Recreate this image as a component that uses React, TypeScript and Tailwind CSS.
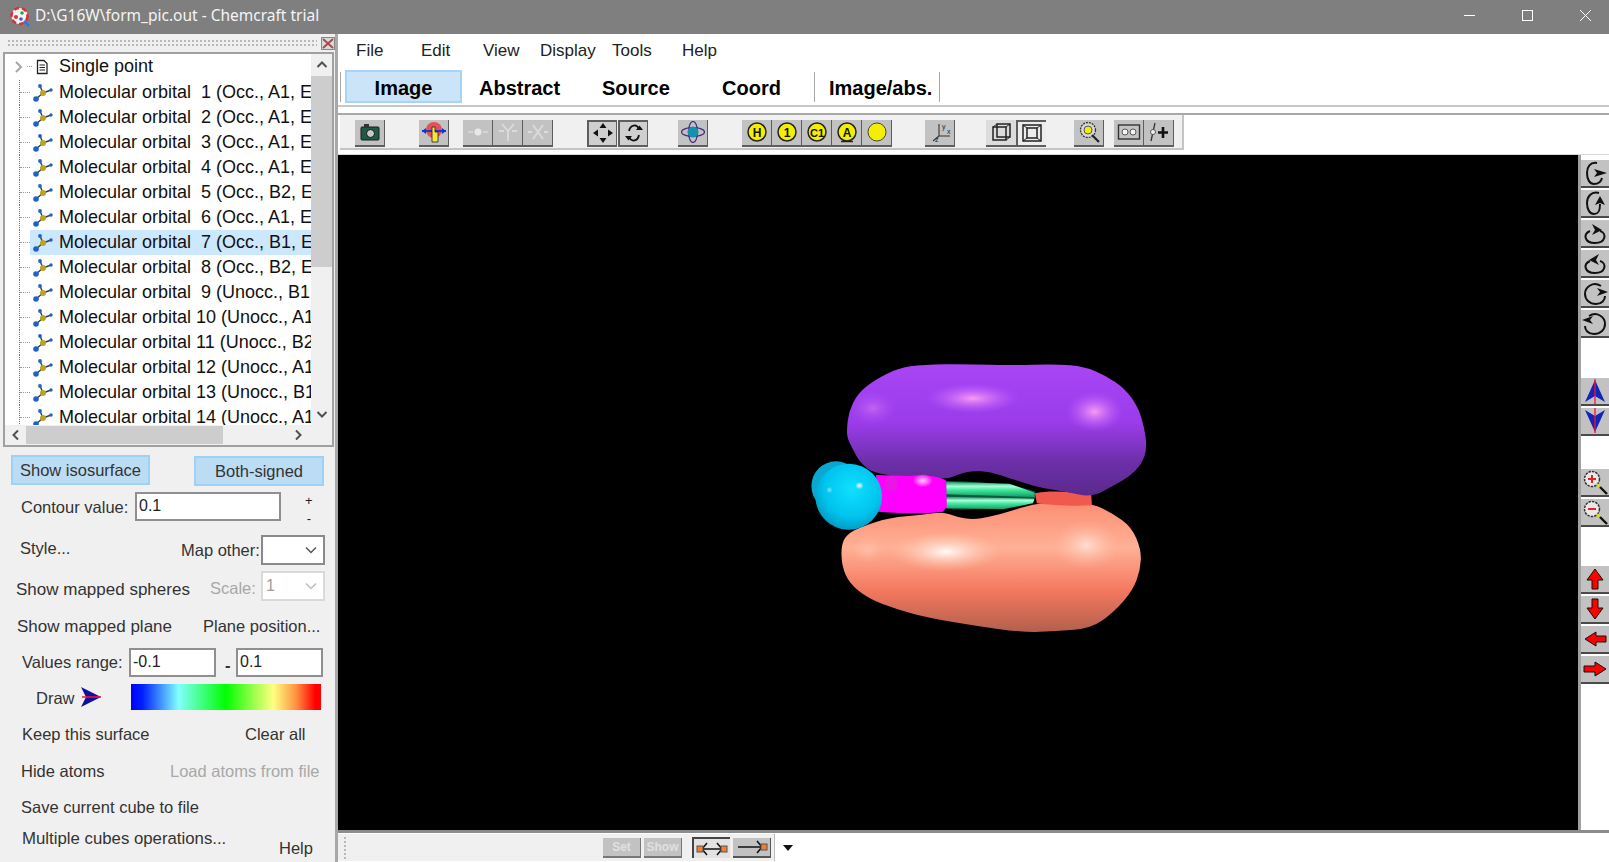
import React from "react";

const FONT = "font-['Liberation_Sans',Arial,sans-serif]";

function MolIcon() {
  return (
    <svg width="21" height="20" viewBox="0 0 21 20" className="shrink-0">
      <path d="M11 10 L4 16 M11 10 L8 3 M11 10 L19 7" stroke="#3b3b3b" strokeWidth="1.4" />
      <circle cx="11" cy="10" r="3" fill="#b7a52a" />
      <circle cx="4" cy="16" r="2.8" fill="#1b62c9" />
      <circle cx="8" cy="3" r="1.9" fill="#1b62c9" />
      <circle cx="19" cy="7" r="1.7" fill="#1b62c9" />
    </svg>
  );
}

const orbitals = [
  " 1 (Occ., A1, E", " 2 (Occ., A1, E", " 3 (Occ., A1, E", " 4 (Occ., A1, E", " 5 (Occ., B2, E",
  " 6 (Occ., A1, E", " 7 (Occ., B1, E", " 8 (Occ., B2, E", " 9 (Unocc., B1", "10 (Unocc., A1",
  "11 (Unocc., B2", "12 (Unocc., A1", "13 (Unocc., B1", "14 (Unocc., A1",
];

function TreeRow({ text, selected }: { text: string; selected?: boolean }) {
  return (
    <div className="flex h-[25px] shrink-0 items-center">
      <div className="ml-[14px] h-full w-[11px] shrink-0 border-l border-dotted border-[#777]">
        <div className="h-[13px] border-b border-dotted border-[#999]" />
      </div>
      <div className={`flex h-full flex-1 items-center overflow-hidden ${selected ? "bg-[#cce8ff]" : ""}`}>
        <div className="ml-[2px]"><MolIcon /></div>
        <span className="ml-[6px] whitespace-pre text-[18px] leading-[25px] text-[#111]">{"Molecular orbital " + text}</span>
      </div>
    </div>
  );
}

function Chev({ d }: { d: string }) {
  return (
    <svg width="12" height="12" viewBox="0 0 12 12">
      <path d={d} fill="none" stroke="#505050" strokeWidth="2" />
    </svg>
  );
}

function Tree() {
  return (
    <div className="ml-[3px] flex h-[395px] w-[331px] flex-col border-2 border-[#a0a0a0] bg-white">
      <div className="flex h-[371px] overflow-hidden">
        <div className="flex min-w-0 flex-1 flex-col overflow-hidden">
          <div className="flex h-[26px] shrink-0 items-center pb-[1px]">
            <svg width="12" height="14" viewBox="0 0 12 14" className="ml-[8px] shrink-0">
              <path d="M3 2 L8 7 L3 12" fill="none" stroke="#a6a6a6" strokeWidth="2" />
            </svg>
            <span className="ml-[2px] h-0 w-[5px] border-b border-dotted border-[#999]" />
            <svg width="14" height="16" viewBox="0 0 14 16" className="ml-[3px] shrink-0">
              <path d="M2.5 1.5 H9 L12 4.500 V14.500 H2.500 Z" fill="#fff" stroke="#222" strokeWidth="1.300" />
              <path d="M4.500 6 H10 M4.500 8.500 H10 M4.500 11 H10" stroke="#222" strokeWidth="1.200" />
            </svg>
            <span className="ml-[10px] text-[18px] leading-[25px] text-[#111]">Single point</span>
          </div>
          {orbitals.map((t, i) => (
            <TreeRow key={t} text={t} selected={i === 6} />
          ))}
        </div>
        <div className="flex w-[21px] shrink-0 flex-col items-center bg-[#f0f0f0]">
          <div className="flex h-[22px] items-center"><Chev d="M1.500 8 L6 3.500 L10.500 8" /></div>
          <div className="h-[191px] w-full bg-[#cdcdcd]" />
          <div className="flex-1" />
          <div className="flex h-[22px] items-center"><Chev d="M1.500 4 L6 8.500 L10.500 4" /></div>
        </div>
      </div>
      <div className="flex h-[20px] items-center bg-[#f0f0f0]">
        <div className="flex w-[21px] justify-center"><Chev d="M8 1.500 L3.500 6 L8 10.500" /></div>
        <div className="h-[18px] w-[197px] bg-[#cdcdcd]" />
        <div className="flex-1" />
        <div className="mr-[28px]"><Chev d="M4 1.500 L8.500 6 L4 10.500" /></div>
      </div>
    </div>
  );
}

function Select({ value, disabled }: { value?: string; disabled?: boolean }) {
  return (
    <div className={`flex h-[30px] w-[64px] items-center justify-between border-2 bg-white pl-[3px] pr-[6px] text-[16px] ${disabled ? "border-[#d9d9d9] text-[#a0a0a0]" : "border-[#8a8a8a] text-[#222]"}`}>
      <span>{value}</span>
      <svg width="12" height="8" viewBox="0 0 12 8">
        <path d="M1 1.500 L6 6.500 L11 1.500" fill="none" stroke={disabled ? "#bdbdbd" : "#555"} strokeWidth="1.500" />
      </svg>
    </div>
  );
}

function TextBox({ value, className }: { value: string; className: string }) {
  return (
    <div className={`flex h-[29px] items-center border-2 border-[#8f8f8f] bg-white pb-[2px] pl-[2px] text-[16px] text-[#222] ${className}`}>{value}</div>
  );
}

function Controls() {
  return (
    <div className="flex flex-1 flex-col overflow-hidden text-[16.500px] text-[#333]">
      <div className="flex h-[44px] shrink-0 pt-[8px]">
        <div className="ml-[11px] flex h-[30px] w-[139px] items-center justify-center border-2 border-[#9fd0f5] bg-[#bcdcf4] pt-[1px]">Show isosurface</div>
        <div className="ml-[44px] mt-[1px] flex h-[30px] w-[130px] items-center justify-center border-2 border-[#9fd0f5] bg-[#bcdcf4] pt-[1px]">Both-signed</div>
      </div>
      <div className="flex h-[34px] shrink-0 items-start pt-[1px]">
        <span className="ml-[21px] w-[114px] pt-[3px]">Contour value:</span>
        <TextBox value="0.1" className="w-[146px]" />
        <div className="ml-[24px] flex flex-col items-center text-[13px] leading-[18px] text-[#222]"><span>+</span><span>-</span></div>
      </div>
      <div className="flex h-[43px] shrink-0 items-start pt-[10px]">
        <span className="ml-[20px] w-[161px] pt-[1px]">Style...</span>
        <span className="w-[80px] whitespace-nowrap pt-[3px]">Map other:</span>
        <Select />
      </div>
      <div className="flex h-[36px] shrink-0 items-center">
        <span className="ml-[16px] w-[194px] pt-[7px] text-[17px]">Show mapped spheres</span>
        <span className="w-[51px] pt-[5px] text-[#a8a8a8]">Scale:</span>
        <Select value="1" disabled />
      </div>
      <div className="flex h-[41px] shrink-0 items-center pt-[4px]">
        <span className="ml-[17px] w-[186px] text-[17px]">Show mapped plane</span>
        <span>Plane position...</span>
      </div>
      <div className="flex h-[35px] shrink-0 items-center">
        <span className="ml-[22px] w-[107px] pb-[1px]">Values range:</span>
        <TextBox value="-0.1" className="w-[87px]" />
        <span className="ml-[9px] w-[11px] pt-[6px] font-bold">-</span>
        <TextBox value="0.1" className="w-[87px]" />
      </div>
      <div className="flex h-[34px] shrink-0 items-center">
        <span className="ml-[36px] w-[44px] pt-[3px]">Draw</span>
        <svg width="22" height="22" viewBox="0 0 22 22" className="shrink-0">
          <path d="M1 1 L21 11 L1 21 L6 11 Z" fill="#10109a" />
          <path d="M2 11 H21" stroke="#ff1030" strokeWidth="1.500" />
        </svg>
        <div className="ml-[29px] h-[26px] w-[190px] bg-[linear-gradient(90deg,#0000ff_0%,#0020ff_6%,#80ffff_25%,#00ff00_50%,#a0ff50_65%,#ffff80_75%,#ff9040_87%,#ff0000_97%)]" />
      </div>
      <div className="flex h-[38px] shrink-0 items-center pt-[2px]">
        <span className="ml-[22px] w-[223px]">Keep this surface</span>
        <span>Clear all</span>
      </div>
      <div className="flex h-[38px] shrink-0 items-center">
        <span className="ml-[21px] w-[149px]">Hide atoms</span>
        <span className="text-[#a8a8a8]">Load atoms from file</span>
      </div>
      <div className="flex h-[34px] shrink-0 items-center">
        <span className="ml-[21px]">Save current cube to file</span>
      </div>
      <div className="flex h-[34px] shrink-0 items-start">
        <span className="ml-[22px] w-[257px] pt-[2px] text-[16.800px]">Multiple cubes operations...</span>
        <span className="pt-[12px]">Help</span>
      </div>
    </div>
  );
}

function LeftPanel() {
  return (
    <div className="flex h-[828px] w-[338px] shrink-0 flex-col border-r-[3px] border-[#a8a8a8] bg-[#f0f0f0]">
      <div className="flex h-[18px] shrink-0 items-center">
        <div className="ml-[7px] h-[8px] w-[310px] bg-[radial-gradient(circle,#b8b8b8_1px,transparent_1.200px)] bg-[length:4px_4px]" />
        <svg width="14" height="13" viewBox="0 0 14 13" className="ml-[4px]">
          <rect x="0.500" y="0.500" width="13" height="12" fill="#d8d8d8" stroke="#888" />
          <path d="M2 2 L12 11 M12 2 L2 11" stroke="#a04a4a" strokeWidth="1.800" />
        </svg>
      </div>
      <Tree />
      <Controls />
    </div>
  );
}

function Btn({ children, className = "", pressed, size = "tb" }: { children?: React.ReactNode; className?: string; pressed?: boolean; size?: string }) {
  const base = size === "side" ? "h-[28px] w-[28px] border-b-2 border-[#4a4a4a] bg-[#c2c2c2]" : "h-[27px] w-[30px] bg-[#c2c2c2] border-b-2 border-r border-[#5e5e5e]";
  const press = pressed ? "border-t-2 border-l-2 border-[#2e2e2e] !bg-[#cfcfcf]" : "";
  return <div className={`flex shrink-0 items-center justify-center ${base} ${press} ${className}`}>{children}</div>;
}

const Ico = ({ children, w = 24, h = 22 }: { children: React.ReactNode; w?: number; h?: number }) => (
  <svg width={w} height={h} viewBox={`0 0 ${w} ${h}`}>{children}</svg>
);

function YellowBall({ t, s = 12, under }: { t?: string; s?: number; under?: boolean }) {
  return (
    <Ico>
      <circle cx="12" cy="11" r="9" fill="#f4ee00" stroke="#222" strokeWidth={t ? 1.500 : 0.800} />
      {t && <text x="12" y="15.500" textAnchor="middle" fontSize={s} fontWeight="700" fontFamily="Liberation Sans" fill="#111">{t}</text>}
      {under && <path d="M6 20.500 H18" stroke="#222" strokeWidth="1.500" />}
    </Ico>
  );
}

function GrayGlyph({ kind }: { kind: number }) {
  return (
    <Ico>
      {kind === 0 && <><circle cx="12" cy="11" r="3.500" fill="#e8e8e8" /><path d="M2 11 H7 M17 11 H22" stroke="#dcdcdc" strokeWidth="1.600" /></>}
      {kind === 1 && <path d="M12 20 V10 L6 3 M12 10 L18 3 M3 10 H8 M16 10 H21" fill="none" stroke="#dcdcdc" strokeWidth="1.800" />}
      {kind === 2 && <path d="M7 4 L17 18 M17 4 L7 18 M2 11 H6 M18 11 H22" fill="none" stroke="#dcdcdc" strokeWidth="1.800" />}
    </Ico>
  );
}

function TopToolbar() {
  return (
    <div className="flex h-[35px] w-[844px] shrink-0 items-center border-b-2 border-r-2 border-[#c4c4c4] bg-[#f0f0f0] pl-[15px] pt-[3px]">
      <Btn>
        <Ico>
          <rect x="3" y="6" width="18" height="13" rx="1" fill="#1f5a45" stroke="#1a1a1a" />
          <rect x="6" y="3" width="5" height="4" fill="#333" />
          <circle cx="12.500" cy="12.500" r="4" fill="#c9c9c9" stroke="#111" />
        </Ico>
      </Btn>
      <Btn className="ml-[34px]">
        <Ico>
          <circle cx="12" cy="9" r="8" fill="#e2505a" />
          <path d="M0 10 H24" stroke="#0a34e0" strokeWidth="1.800" />
          <path d="M0 10 L4 7 V13 Z M24 10 L20 7 V13 Z" fill="#0a34e0" />
          <path d="M10 21 V6 H13 V11 H16 V21 Z" fill="#f8e43a" stroke="#222" strokeWidth="0.800" />
        </Ico>
      </Btn>
      <Btn className="ml-[14px]"><GrayGlyph kind={0} /></Btn>
      <Btn><GrayGlyph kind={1} /></Btn>
      <Btn><GrayGlyph kind={2} /></Btn>
      <Btn pressed className="ml-[34px]">
        <Ico>
          <path d="M12 1 L8.500 6 H15.500 Z M12 21 L8.500 16 H15.500 Z M2 11 L7 7.500 V14.500 Z M22 11 L17 7.500 V14.500 Z" fill="#111" />
        </Ico>
      </Btn>
      <Btn pressed className="ml-[1px]">
        <Ico>
          <path d="M7 9 A5.500 7.500 0 0 1 17 7 M17 13 A5.500 7.500 0 0 1 7 15" fill="none" stroke="#111" strokeWidth="1.800" />
          <path d="M14 8 H21 L17.500 3.500 Z M3 14 H10 L6.500 18.500 Z" fill="#111" />
        </Ico>
      </Btn>
      <Btn className="ml-[30px]">
        <Ico>
          <ellipse cx="12" cy="11" rx="4.500" ry="10.500" fill="none" stroke="#4a2a7a" strokeWidth="1.200" />
          <ellipse cx="12" cy="11" rx="11.500" ry="4.500" fill="none" stroke="#4a2a7a" strokeWidth="1.200" />
          <circle cx="12" cy="11" r="5.500" fill="#1590b0" />
        </Ico>
      </Btn>
      <Btn className="ml-[34px]"><YellowBall t="H" /></Btn>
      <Btn><YellowBall t="1" /></Btn>
      <Btn><YellowBall t="C1" s={11} /></Btn>
      <Btn><YellowBall t="A" under /></Btn>
      <Btn><YellowBall /></Btn>
      <Btn className="ml-[33px]">
        <Ico>
          <path d="M11 3 V15 H22 M11 15 L5 20" fill="none" stroke="#333" strokeWidth="1.100" />
          <text x="14" y="8" fontSize="7" fontFamily="Liberation Sans" fill="#222">y</text>
          <text x="19" y="13" fontSize="7" fontFamily="Liberation Sans" fill="#222">x</text>
          <text x="7" y="21" fontSize="7" fontFamily="Liberation Sans" fill="#222">z</text>
        </Ico>
      </Btn>
      <Btn className="ml-[31px] border-r-0 !bg-[#dcdcdc]">
        <Ico>
          <rect x="4" y="6" width="13" height="13" fill="none" stroke="#222" strokeWidth="1.500" />
          <rect x="8" y="3" width="13" height="13" fill="none" stroke="#222" strokeWidth="1.500" />
          <path d="M4 6 L8 3 M17 6 L21 3 M17 19 L21 16" stroke="#222" />
        </Ico>
      </Btn>
      <Btn pressed className="border-b-0 border-r-0 !bg-[#ededed]">
        <Ico>
          <rect x="3" y="3" width="18" height="16" fill="none" stroke="#222" strokeWidth="1.500" />
          <rect x="7" y="6" width="10" height="10" fill="none" stroke="#222" strokeWidth="1.500" />
          <path d="M3 3 L7 6 M21 3 L17 6 M3 19 L7 16 M21 19 L17 16" stroke="#222" />
        </Ico>
      </Btn>
      <Btn className="ml-[28px]">
        <Ico>
          <circle cx="11" cy="9" r="7.500" fill="#d8d8d8" stroke="#333" strokeWidth="1.300" strokeDasharray="2 1" />
          <circle cx="11" cy="9" r="4" fill="#f4ee00" stroke="#555" />
          <path d="M15 14 L22 21" stroke="#222" strokeWidth="2.200" />
        </Ico>
      </Btn>
      <Btn className="ml-[10px]">
        <Ico>
          <rect x="1.500" y="4" width="21" height="14" fill="none" stroke="#333" strokeWidth="1.400" />
          <circle cx="8" cy="11" r="3" fill="#f4f4f4" stroke="#555" />
          <circle cx="16" cy="11" r="3" fill="#f4f4f4" stroke="#555" />
        </Ico>
      </Btn>
      <Btn>
        <Ico>
          <path d="M8 2 L4 20" stroke="#333" strokeWidth="1.300" />
          <circle cx="6" cy="11" r="2.500" fill="#f4f4f4" stroke="#555" />
          <path d="M16 6 V17 M11 11.500 H21" stroke="#111" strokeWidth="2.600" />
        </Ico>
      </Btn>
    </div>
  );
}

function Rot({ d, head }: { d: string; head: string }) {
  return (
    <Ico w={26} h={26}>
      <path d={d} fill="none" stroke="#111" strokeWidth="2" />
      <path d={head} fill="#111" />
    </Ico>
  );
}

function RightBar() {
  const arrow = (p: string, line: string, fill: string, lineC: string) => (
    <Ico w={26} h={26}>
      <path d={p} fill={fill} stroke={fill === "#ff0000" ? "#111" : "none"} strokeWidth="1" />
      <path d={line} stroke={lineC} strokeWidth="1.300" />
    </Ico>
  );
  const mag = (minus?: boolean) => (
    <Ico w={26} h={26}>
      <circle cx="10" cy="10" r="7.500" fill="#e8e8e8" stroke="#333" strokeWidth="1.500" strokeDasharray="2.500 1" />
      <path d="M6 10 H14" stroke="#e8202a" strokeWidth="2" />
      {!minus && <path d="M10 6 V14" stroke="#e8202a" strokeWidth="2" />}
      <path d="M15 15 L18 18" stroke="#d8d820" strokeWidth="2.200" />
      <path d="M18 18 L25 25" stroke="#111" strokeWidth="2.400" />
    </Ico>
  );
  return (
    <div className="flex w-[31px] shrink-0 flex-col items-end border-l-[3px] border-[#a0a0a0] bg-white pt-[5px]">
      <div className="flex w-full flex-col items-end gap-[2px]">
        <Btn size="side"><Rot d="M15 3 C8 2 5 7 5 13 C5 20 8 24 12 24 C16 24 19 22 20 18" head="M12 9 L25 13 L12 17 L15 13 Z" /></Btn>
        <Btn size="side"><Rot d="M17 3 C9 1 5 7 5 13 C5 20 8 24 12 24 C16 24 18 22 18 14" head="M13 15 L18 6 L23 15 L18 13 Z" /></Btn>
        <Btn size="side"><Rot d="M8 11 C1 14 2 23 13 23 C24 23 25 13 18 11" head="M10 4 L20 10 L10 15 L13 10 Z" /></Btn>
        <Btn size="side"><Rot d="M8 11 C1 14 2 23 13 23 C24 23 25 13 18 11" head="M17 4 L7 10 L17 15 L14 10 Z" /></Btn>
        <Btn size="side"><Rot d="M19 6 C11 1 3 7 3 14 C3 20 8 24 14 24 C20 24 23 20 23 16" head="M15 8 L26 12 L15 16 L18 12 Z" /></Btn>
        <Btn size="side"><Rot d="M7 6 C15 1 23 7 23 14 C23 20 18 24 12 24 C6 24 3 20 3 16" head="M11 6 L0 10 L11 14 L8 10 Z" /></Btn>
      </div>
      <div className="mt-[40px] flex w-full flex-col items-end gap-[2px]">
        <Btn size="side">{arrow("M13 2 L23 24 L13 18 L3 24 Z", "M13 1 V26", "#1126b8", "#ff1030")}</Btn>
        <Btn size="side">{arrow("M13 24 L23 2 L13 8 L3 2 Z", "M13 0 V25", "#1126b8", "#ff1030")}</Btn>
      </div>
      <div className="mt-[33px] flex w-full flex-col items-end gap-[2px]">
        <Btn size="side">{mag()}</Btn>
        <Btn size="side">{mag(true)}</Btn>
      </div>
      <div className="mt-[39px] flex w-full flex-col items-end gap-[2px]">
        <Btn size="side">{arrow("M13 3 L21 14 H16 V23 H10 V14 H5 Z", "M0 0 V0", "#ff0000", "#000")}</Btn>
        <Btn size="side">{arrow("M13 23 L21 12 H16 V3 H10 V12 H5 Z", "M0 0 V0", "#ff0000", "#000")}</Btn>
        <Btn size="side">{arrow("M3 13 L14 6 V10 H24 V16 H14 V20 Z", "M0 0 V0", "#ff0000", "#000")}</Btn>
        <Btn size="side">{arrow("M24 13 L13 6 V10 H2 V16 H13 V20 Z", "M0 0 V0", "#ff0000", "#000")}</Btn>
      </div>
    </div>
  );
}

const smooth = (pts: number[][]) => {
  const mid = (a: number[], b: number[]) => `${(a[0] + b[0]) / 2} ${(a[1] + b[1]) / 2}`;
  let d = `M${mid(pts[pts.length - 1], pts[0])}`;
  pts.forEach((p, i) => {
    d += ` Q${p[0]} ${p[1]} ${mid(p, pts[(i + 1) % pts.length])}`;
  });
  return d + "Z";
};

const purple = [[172,240],[178,185],[205,130],[255,90],[325,55],[400,43],[540,42],[660,46],[800,42],[885,50],[950,78],[1005,115],[1045,170],[1065,235],[1072,298],[1056,342],[1022,378],[970,408],[905,442],[830,425],[760,415],[700,398],[640,378],[600,366],[550,362],[510,372],[465,390],[258,374],[212,338],[190,298],[174,265]];
const salmon = [[155,590],[170,555],[215,530],[300,503],[400,495],[460,485],[500,500],[550,509],[600,500],[660,485],[730,462],[800,456],[910,461],[968,490],[1025,530],[1055,600],[1052,660],[1030,720],[975,785],[905,835],[800,844],[700,847],[560,828],[420,804],[320,778],[235,745],[180,700],[158,650]];

function Molecule() {
  return (
    <svg viewBox="0 0 1239 675" className="h-full w-full" preserveAspectRatio="none">
      <defs>
        <linearGradient id="pur" x1="0" y1="0" x2="0" y2="1">
          <stop offset="0" stopColor="#a945f5" />
          <stop offset="0.45" stopColor="#9a3cea" />
          <stop offset="0.75" stopColor="#6c2fa8" />
          <stop offset="1" stopColor="#5b2a8c" />
        </linearGradient>
        <linearGradient id="sal" x1="0" y1="0" x2="0" y2="1">
          <stop offset="0" stopColor="#fb8e74" />
          <stop offset="0.35" stopColor="#ffb095" />
          <stop offset="0.68" stopColor="#f4785f" />
          <stop offset="1" stopColor="#b2604c" />
        </linearGradient>
        <radialGradient id="hlp">
          <stop offset="0" stopColor="#ffa0f4" stopOpacity="0.950" />
          <stop offset="1" stopColor="#c060ff" stopOpacity="0" />
        </radialGradient>
        <radialGradient id="hls">
          <stop offset="0" stopColor="#ffffff" stopOpacity="0.950" />
          <stop offset="1" stopColor="#ffc8b0" stopOpacity="0" />
        </radialGradient>
        <radialGradient id="cy" cx="0.550" cy="0.380" r="0.700">
          <stop offset="0" stopColor="#10e0ff" />
          <stop offset="0.600" stopColor="#00c4ee" />
          <stop offset="1" stopColor="#0090b8" />
        </radialGradient>
        <linearGradient id="grn" x1="0" y1="0" x2="0" y2="1">
          <stop offset="0" stopColor="#159060" />
          <stop offset="0.300" stopColor="#a8ffd8" />
          <stop offset="0.550" stopColor="#3fe89a" />
          <stop offset="1" stopColor="#149a68" />
        </linearGradient>
        <radialGradient id="white"><stop offset="0" stopColor="#fff" /><stop offset="1" stopColor="#fff" stopOpacity="0" /></radialGradient>
      </defs>
      <g transform="translate(451 195) scale(0.33333)">
        <path d={smooth(salmon)} fill="url(#sal)" />
        <ellipse cx="470" cy="605" rx="165" ry="60" fill="url(#hls)" />
        <ellipse cx="890" cy="585" rx="100" ry="75" fill="url(#hls)" opacity="0.600" />
        <ellipse cx="235" cy="600" rx="50" ry="40" fill="url(#hls)" opacity="0.250" />
        <path d="M470 393 C560 396 660 398 737 425 L737 445 C680 472 560 482 470 477 Z" fill="#0b5a3e" />
        <path d="M470 395 L660 401 L735 428 L735 441 L470 433 Z" fill="url(#grn)" />
        <path d="M470 440 L735 446 L730 460 L640 478 L470 474 Z" fill="url(#grn)" />
        <path d="M736 430 C780 420 850 425 905 435 L907 466 C850 470 780 465 742 460 Z" fill="#f0594f" />
        <path d={smooth(purple)} fill="url(#pur)" />
        <ellipse cx="550" cy="145" rx="140" ry="45" fill="url(#hlp)" />
        <ellipse cx="915" cy="185" rx="85" ry="60" fill="url(#hlp)" />
        <ellipse cx="250" cy="175" rx="70" ry="50" fill="url(#hlp)" opacity="0.400" />
        <path d="M260 375 L360 378 C410 372 450 380 470 392 L472 470 L460 485 C400 492 320 490 265 485 Z" fill="#ff00ff" />
        <ellipse cx="400" cy="392" rx="30" ry="20" fill="url(#white)" opacity="0.800" />
        <ellipse cx="305" cy="400" rx="20" ry="24" fill="#e020d8" opacity="0.700" />
        <circle cx="140" cy="408" r="74" fill="#0aa8d0" />
        <ellipse cx="178" cy="440" rx="100" ry="99" fill="url(#cy)" />
        <ellipse cx="210" cy="407" rx="13" ry="11" fill="url(#white)" />
        <ellipse cx="120" cy="420" rx="10" ry="10" fill="url(#white)" opacity="0.500" />
      </g>
    </svg>
  );
}

function BottomBar() {
  return (
    <div className="flex h-[29px] shrink-0 items-center bg-white">
      <div className="flex h-[27px] w-[437px] items-center border-r border-[#bdbdbd] bg-[#f0f0f0]">
        <div className="ml-[5px] h-[24px] w-[4px] bg-[radial-gradient(circle,#b8b8b8_1px,transparent_1.200px)] bg-[length:4px_4px]" />
        <div className="ml-[256px] flex h-[20px] w-[38px] items-center justify-center border-b-2 border-r border-[#777] bg-[#c2c2c2] text-[12px] font-bold text-[#e0e0e0]">Set</div>
        <div className="ml-[3px] flex h-[20px] w-[38px] items-center justify-center border-b-2 border-r border-[#777] bg-[#c2c2c2] text-[12px] font-bold text-[#e0e0e0]">Show</div>
        <div className="ml-[10px] flex h-[21px] w-[38px] items-center justify-center border-l-2 border-t-2 border-[#444] bg-[#e2e2e2]">
          <svg width="32" height="14" viewBox="0 0 32 14">
            <path d="M6 7 H26 M11 1 L6 7 L11 13 M21 1 L26 7 L21 13" fill="none" stroke="#111" strokeWidth="1.500" />
            <rect x="1" y="4" width="6" height="6" fill="#f08030" stroke="#555" />
            <rect x="25" y="4" width="6" height="6" fill="#f08030" stroke="#555" />
          </svg>
        </div>
        <div className="ml-[3px] flex h-[20px] w-[38px] items-center justify-center border-b-2 border-r border-[#555] bg-[#c2c2c2]">
          <svg width="32" height="14" viewBox="0 0 32 14">
            <path d="M2 7 H26 M21 1 L26 7 L21 13" fill="none" stroke="#111" strokeWidth="1.600" />
            <rect x="25" y="4" width="6" height="6" fill="#f08030" stroke="#555" />
          </svg>
        </div>
      </div>
      <svg width="10" height="6" viewBox="0 0 10 6" className="ml-[8px]"><path d="M0 0 H10 L5 6 Z" fill="#111" /></svg>
    </div>
  );
}

export default function App() {
  return (
    <div className={`flex h-[862px] w-[1609px] flex-col overflow-hidden bg-white ${FONT}`}>
      <div className="flex h-[34px] shrink-0 items-center bg-[#7f7f7f] text-white">
        <svg width="20" height="20" viewBox="0 0 20 20" className="ml-[10px]">
          <circle cx="9.500" cy="9" r="8" fill="#f4f4f4" stroke="#d8303a" strokeWidth="2.500" strokeDasharray="5 3" />
          <circle cx="6" cy="10" r="2" fill="#e03030" />
          <circle cx="12" cy="6" r="1.800" fill="#30a040" />
          <circle cx="11" cy="12" r="1.800" fill="#3060d0" />
          <path d="M14 14 L19 19" stroke="#2a7ad8" strokeWidth="2.500" />
        </svg>
        <span className="ml-[5px] pb-[2px] font-['Noto_Sans',sans-serif] text-[15.500px] text-[#f4f4f4]">D:\G16W\form_pic.out - Chemcraft trial</span>
        <div className="ml-auto flex h-full items-center">
          <svg width="58" height="34" viewBox="0 0 58 34"><path d="M24 15.500 H35" stroke="#fff" /></svg>
          <svg width="58" height="34" viewBox="0 0 58 34"><rect x="24.500" y="10.500" width="10" height="10" fill="none" stroke="#fff" /></svg>
          <svg width="53" height="34" viewBox="0 0 53 34"><path d="M24 10 L35 21 M35 10 L24 21" stroke="#fff" /></svg>
        </div>
      </div>
      <div className="flex min-h-0 flex-1">
        <LeftPanel />
        <div className="flex min-w-0 flex-1 flex-col">
          <div className="flex h-[34px] shrink-0 items-center text-[17px] text-[#222]">
            <span className="ml-[18px] w-[65px]">File</span>
            <span className="w-[62px]">Edit</span>
            <span className="w-[57px]">View</span>
            <span className="w-[72px]">Display</span>
            <span className="w-[70px]">Tools</span>
            <span>Help</span>
          </div>
          <div className="flex h-[37px] shrink-0 items-center text-[20px] font-bold text-black">
            <div className="ml-[2px] h-[30px] w-px bg-[#a8a8a8]" />
            <div className="ml-[4px] flex h-[33px] w-[117px] items-center justify-center border-2 border-[#a6d4f8] bg-[#cce4f7] pt-[3px]">Image</div>
            <span className="ml-[17px] w-[123px] pt-[3px]">Abstract</span>
            <span className="w-[120px] pt-[3px]">Source</span>
            <span className="w-[92px] pt-[3px]">Coord</span>
            <div className="h-[30px] w-px bg-[#a8a8a8]" />
            <span className="ml-[14px] w-[110px] whitespace-nowrap pt-[3px]">Image/abs.</span>
            <div className="h-[30px] w-px bg-[#a8a8a8]" />
          </div>
          <div className="h-[8px] shrink-0 border-t-2 border-[#c8c8c8]" />
          <div className="h-[2px] shrink-0 bg-[#a8a8a8]" />
          <div className="ml-[2px] shrink-0"><TopToolbar /></div>
          <div className="h-[5px] shrink-0 border-b border-[#d8d8d8]" />
          <div className="flex min-h-0 flex-1 border-b-[3px] border-[#8c8c8c]">
            <div className="min-w-0 flex-1 bg-black"><Molecule /></div>
            <RightBar />
          </div>
          <BottomBar />
        </div>
      </div>
    </div>
  );
}
